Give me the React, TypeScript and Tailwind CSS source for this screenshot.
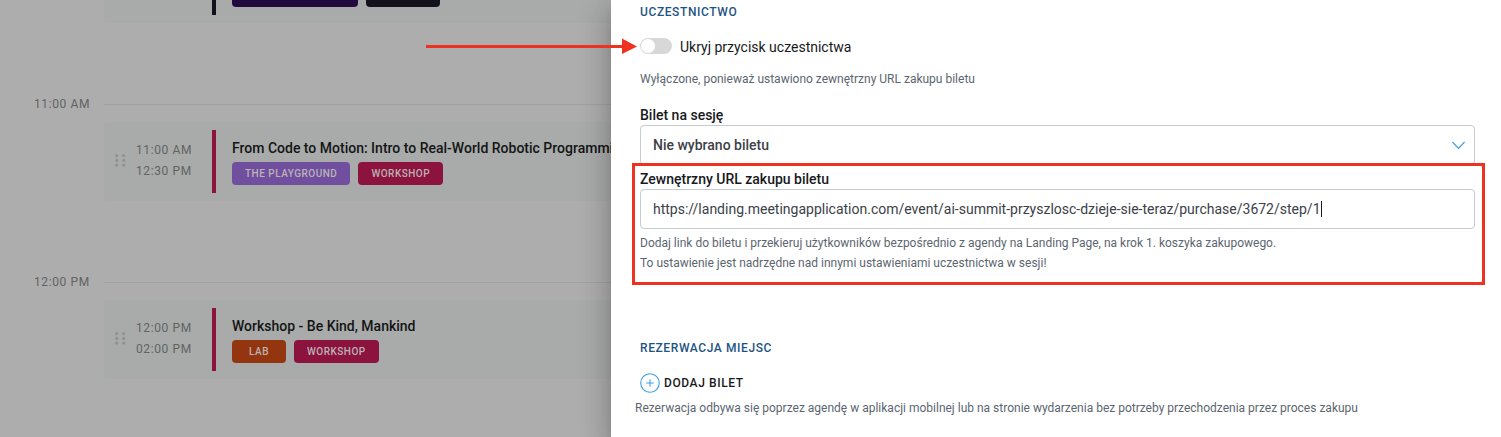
import { useState } from 'react';

interface Tag {
  label: string;
  className: string;
}

interface Session {
  hour: string;
  start: string;
  end: string;
  title: string;
  tags: Tag[];
}

const sessions: Session[] = [
  {
    hour: '11:00 AM',
    start: '11:00 AM',
    end: '12:30 PM',
    title: 'From Code to Motion: Intro to Real-World Robotic Programming',
    tags: [
      { label: 'THE PLAYGROUND', className: 'bg-[#714f9f]' },
      { label: 'WORKSHOP', className: 'bg-[#8d133f]' },
    ],
  },
  {
    hour: '12:00 PM',
    start: '12:00 PM',
    end: '02:00 PM',
    title: 'Workshop - Be Kind, Mankind',
    tags: [
      { label: 'LAB', className: 'bg-[#933610]' },
      { label: 'WORKSHOP', className: 'bg-[#8d133f]' },
    ],
  },
];

function DragHandle() {
  return (
    <svg width="11" height="13" viewBox="0 0 11 13" fill="#8f9291" aria-hidden="true">
      {[1.6, 6.4, 11.1].map((y) => (
        <g key={y}>
          <circle cx="1.7" cy={y} r="1.6" />
          <circle cx="8.7" cy={y} r="1.6" />
        </g>
      ))}
    </svg>
  );
}

function SessionBlock({ session }: { session: Session }) {
  return (
    <section className="mb-[63px]">
      <div className="flex h-9 items-center">
        <span className="w-[104px] shrink-0 pl-[34px] text-xs tracking-wider text-[#626363]">
          {session.hour}
        </span>
        <div className="h-px flex-1 bg-[#a0a2a2]" />
      </div>

      <div className="ml-[104px] flex items-stretch rounded-l bg-[#a8abaa] py-2">
        <div className="flex w-[108px] shrink-0 items-center gap-2.5 pb-0.5 pl-[11px]">
          <DragHandle />
          <div className="text-xs leading-[21px] tracking-wider whitespace-nowrap text-[#626363]">
            <div>{session.start}</div>
            <div>{session.end}</div>
          </div>
        </div>
        <div className="w-1 shrink-0 bg-[#8d133f]" />
        <div className="flex h-[63px] flex-col pt-2 pl-4">
          <h3 className="text-sm leading-5 font-medium whitespace-nowrap text-[#141515]">
            {session.title}
          </h3>
          <div className="mt-1 flex gap-2">
            {session.tags.map((tag) => (
              <span
                key={tag.label}
                className={`min-w-[54px] rounded px-[13px] text-center text-[10px] leading-[23px] font-medium tracking-wider whitespace-nowrap text-[#b9b3b6] ${tag.className}`}
              >
                {tag.label}
              </span>
            ))}
          </div>
        </div>
      </div>
    </section>
  );
}

function Agenda() {
  return (
    <main className="min-w-0 overflow-hidden bg-[#adadad]">
      {/* Bottom edge of the session scrolled off the top */}
      <div className="mb-[63px] ml-[104px] flex h-[23px] items-start rounded-bl bg-[#a8abaa] pl-[108px]">
        <div className="h-[15px] w-1 bg-[#12111c]" />
        <div className="ml-4 h-[7px] w-[126px] rounded-b bg-[#210b3e]" />
        <div className="ml-2 h-[7px] w-[74px] rounded-b bg-[#12111c]" />
      </div>
      {sessions.map((session) => (
        <SessionBlock key={session.hour} session={session} />
      ))}
    </main>
  );
}

function Arrow() {
  return (
    <svg
      className="absolute top-px right-full mr-[3px]"
      width="211"
      height="16"
      viewBox="0 0 211 16"
      fill="#ee321f"
      aria-hidden="true"
    >
      <path d="M0 7h196V0.5L211 8.5L196 16V10H0z" />
    </svg>
  );
}

export default function App() {
  const [hidden, setHidden] = useState(false);
  const [url, setUrl] = useState(
    'https://landing.meetingapplication.com/event/ai-summit-przyszlosc-dzieje-sie-teraz/purchase/3672/step/1',
  );

  return (
    <div className="grid h-screen grid-cols-[611fr_890fr] overflow-hidden font-[Roboto,sans-serif]">
      <Agenda />

      <aside className="relative z-10 bg-white pt-0.5 pr-[26px] pl-[29px] text-sm leading-5 text-[#17191c] shadow-[0_8px_10px_-5px_rgba(0,0,0,0.2),0_16px_24px_2px_rgba(0,0,0,0.14),0_6px_30px_5px_rgba(0,0,0,0.12)]">
        <h2 className="text-xs leading-5 font-medium tracking-wider text-[#1d5485]">UCZESTNICTWO</h2>

        <div className="relative mt-[15px] flex h-5 items-start">
          <Arrow />
          <input
            id="hide-button"
            type="checkbox"
            role="switch"
            checked={hidden}
            onChange={(e) => setHidden(e.target.checked)}
            className="mt-px h-4 w-8 appearance-none rounded-full bg-[#d8d8d8] p-px before:block before:size-3.5 before:rounded-full before:bg-white checked:bg-[#3b9fe6] checked:before:ml-4"
          />
          <label htmlFor="hide-button" className="pl-2">
            Ukryj przycisk uczestnictwa
          </label>
        </div>
        <p className="mt-3 text-xs leading-5 text-[#5c6670]">
          Wyłączone, ponieważ ustawiono zewnętrzny URL zakupu biletu
        </p>

        <label htmlFor="ticket" className="mt-4 block font-medium">
          Bilet na sesję
        </label>
        <div className="relative">
          <select
            id="ticket"
            className="block h-10 w-full appearance-none rounded border border-[#c5cad3] bg-white px-3 font-medium text-[#3c4148] outline-none"
          >
            <option>Nie wybrano biletu</option>
          </select>
          <svg
            className="pointer-events-none absolute top-4 right-2.5"
            width="13"
            height="9"
            viewBox="0 0 13 9"
            fill="none"
            stroke="#3b9fe6"
            strokeWidth="1.2"
            aria-hidden="true"
          >
            <path d="M0.4 1L6.5 7.4L12.6 1" />
          </svg>
        </div>

        <div className="relative pt-1">
          <label htmlFor="url" className="block font-medium">
            Zewnętrzny URL zakupu biletu
          </label>
          <div className="relative">
            <input
              id="url"
              type="text"
              value={url}
              onChange={(e) => setUrl(e.target.value)}
              className="block h-10 w-full rounded border border-[#c5cad3] bg-white px-3 text-[#3c4148] outline-none"
            />
            {/* Text cursor at the end of the address */}
            <div className="absolute top-3 left-[681px] h-4 w-px bg-[#17191c]" />
          </div>
          <p className="mt-1 text-xs leading-5 text-[#5c6670]">
            Dodaj link do biletu i przekieruj użytkowników bezpośrednio z agendy na Landing Page, na krok 1. koszyka
            zakupowego.
            <br />
            To ustawienie jest nadrzędne nad innymi ustawieniami uczestnictwa w sesji!
          </p>
          <div className="pointer-events-none absolute -top-0.5 -right-2.5 -bottom-3 -left-2 border-3 border-[#ee321f]" />
        </div>

        <h2 className="mt-[65px] text-xs leading-5 font-medium tracking-wider text-[#1d5485]">REZERWACJA MIEJSC</h2>
        <button type="button" className="mt-[15px] flex h-5 items-center gap-1 text-xs font-medium tracking-wider">
          <svg width="20" height="20" viewBox="0 0 20 20" fill="none" stroke="#3b9fe6" aria-hidden="true">
            <circle cx="10" cy="10" r="9.3" strokeWidth="1.1" />
            <path d="M10 6.2v7.6M6.2 10h7.6" strokeWidth="1" />
          </svg>
          DODAJ BILET
        </button>
        <p className="-ml-[5px] pt-[5px] text-xs leading-5 text-[#5c6670]">
          Rezerwacja odbywa się poprzez agendę w aplikacji mobilnej lub na stronie wydarzenia bez potrzeby
          przechodzenia przez proces zakupu
        </p>
      </aside>
    </div>
  );
}
